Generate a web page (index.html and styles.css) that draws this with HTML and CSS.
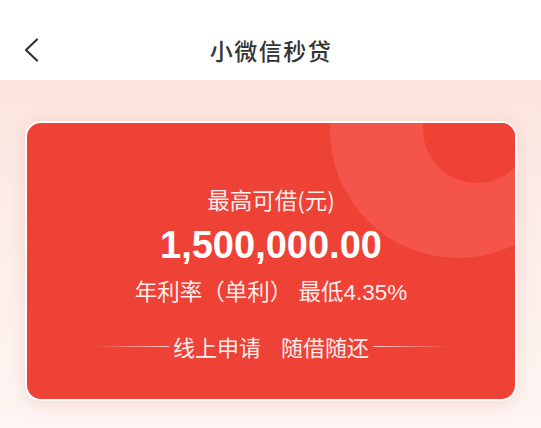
FILE: index.html
```html
<!DOCTYPE html>
<html lang="zh-CN">
<head>
<meta charset="utf-8">
<title>小微信秒贷</title>
<link rel="stylesheet" href="styles.css">
</head>
<body>
<div class="page">
  <header class="header">
    <div class="back">
      <svg width="16" height="24" viewBox="0 0 16 24" aria-hidden="true">
        <polyline points="14,1.5 3,12 14,22.5" fill="none" stroke="#333" stroke-width="2.2" stroke-linecap="round" stroke-linejoin="round"/>
      </svg>
    </div>
    <h1 class="title">小微信秒贷</h1>
    <div class="spacer"></div>
  </header>
  <main class="main">
    <section class="card">
      <div class="deco deco-big"></div>
      <div class="deco deco-small"></div>
      <div class="card-body">
        <div class="label">最高可借(元)</div>
        <div class="amount">1,500,000.00</div>
        <div class="rate">年利率（单利） 最低4.35%</div>
        <div class="slogan">
          <span class="line line-left"></span>
          <span class="slogan-text"><span>线上申请</span><span>随借随还</span></span>
          <span class="line line-right"></span>
        </div>
      </div>
    </section>
  </main>
</div>
</body>
</html>
```
FILE: styles.css
```css
* { box-sizing: border-box; }
html, body { margin: 0; padding: 0; }
body {
  width: 541px;
  height: 428px;
  overflow: hidden;
  font-family: "Liberation Sans", "Noto Sans CJK SC", sans-serif;
  background: #fdf5f3;
}
.page { width: 541px; height: 428px; display: flex; flex-direction: column; }
.header {
  height: 80px;
  padding-top: 20px;
  background: #fff;
  display: grid;
  grid-template-columns: 1fr auto 1fr;
  align-items: center;
}
.back { padding-left: 23px; display: flex; align-items: center; }
.title {
  margin: 0;
  font-family: "Noto Sans CJK SC", sans-serif;
  font-size: 23px;
  font-weight: 500;
  color: #333;
  letter-spacing: 1.5px;
  line-height: 1;
  padding-left: 1px;
}
.main {
  flex: 1;
  background: linear-gradient(to bottom, #fce4de 0%, #fdeee9 50%, #fdf6f4 100%);
  padding: 41px 24px 0 25px;
}
.card {
  position: relative;
  height: 280px;
  border: 2px solid #fff;
  border-radius: 16px;
  background: #ee4236;
  overflow: hidden;
  box-shadow: 0 4px 16px rgba(226, 120, 100, 0.22);
}
.deco { position: absolute; border-radius: 50%; }
.deco-big {
  width: 256px; height: 256px;
  left: 303px; top: -121px;
  background: #f5544a;
}
.deco-small {
  width: 108px; height: 108px;
  left: 396px; top: -48px;
  background: #ef4236;
}
.card-body {
  position: relative;
  display: flex;
  flex-direction: column;
  align-items: center;
  padding-top: 61px;
  color: rgba(255, 255, 255, 0.93);
}
.label { font-size: 22.5px; line-height: 30px; font-family: "Noto Sans CJK SC", sans-serif; }
.amount {
  margin-top: 9px;
  font-size: 38px;
  line-height: 44px;
  font-weight: 700;
  color: #fff;
  font-family: "Liberation Sans", Roboto, sans-serif;
}
.rate { margin-top: 11px; font-size: 22.5px; line-height: 30px; }
.slogan {
  margin-top: 23px;
  display: flex;
  align-items: center;
  gap: 4px;
}
.slogan-text {
  display: flex;
  gap: 20px;
  font-size: 22px;
  line-height: 30px;
  font-family: "Noto Sans CJK SC", sans-serif;
}
.line { width: 75px; height: 1px; }
.line-left { background: linear-gradient(to right, rgba(255,255,255,0), rgba(255,255,255,0.75)); }
.line-right { background: linear-gradient(to left, rgba(255,255,255,0), rgba(255,255,255,0.75)); }
```
